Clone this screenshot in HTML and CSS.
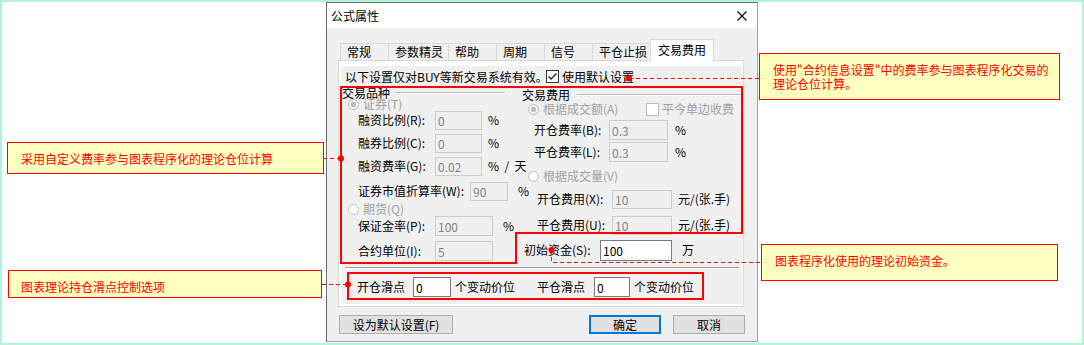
FILE: index.html
```html
<!DOCTYPE html>
<html lang="zh-CN">
<head>
  <meta charset="UTF-8" />
  <title>公式属性</title>
  <link rel="stylesheet" href="styles.css">
</head>
<body>
<div class="stage">
  <div class="dialog">
    <div class="titlebar">
      <span>公式属性</span>
      <svg class="close" width="10" height="10" viewBox="0 0 10 10"><path d="M0.5 0.5L9.5 9.5M9.5 0.5L0.5 9.5" stroke="#000" stroke-width="1.1" fill="none"/></svg>
    </div>

    <div class="dialog-body">
      <div class="tabs">
        <div class="tab">常规</div>
        <div class="tab">参数精灵</div>
        <div class="tab">帮助</div>
        <div class="tab">周期</div>
        <div class="tab">信号</div>
        <div class="tab">平仓止损</div>
        <div class="tab active">交易费用</div>
      </div>

      <div class="panel">
        <div class="page">
          <div class="notice">
            <span class="notice-text">以下设置仅对BUY等新交易系统有效。</span>
            <span class="checkbox"><svg width="11" height="11" viewBox="0 0 11 11"><path d="M1.5 5.5L4 8L9.5 2.5" stroke="#222" stroke-width="1.3" fill="none"/></svg></span>
            <span>使用默认设置</span>
          </div>

          <div class="groups">
            <div class="col col-left">
              <div class="legend"><span>交易品种</span><span class="rule rule-short"></span></div>
              <div class="row opt-l"><span class="radio on"></span><span class="muted">证券(T)</span></div>
              <div class="row field-l"><span class="lbl">融资比例(R):</span><input class="num s" disabled value="0"><span class="unit">%</span></div>
              <div class="row field-l"><span class="lbl">融券比例(C):</span><input class="num s" disabled value="0"><span class="unit">%</span></div>
              <div class="row field-l"><span class="lbl">融资费率(G):</span><input class="num s" disabled value="0.02"><span class="unit">%&nbsp; /&nbsp; 天</span></div>
              <div class="row field-l"><span class="lbl lbl-wide">证券市值折算率(W):</span><input class="num xs" disabled value="90"><span class="unit far">%</span></div>
              <div class="row opt-l"><span class="radio"></span><span class="muted">期货(Q)</span></div>
              <div class="row field-l"><span class="lbl">保证金率(P):</span><input class="num m" disabled value="100"><span class="unit far">%</span></div>
              <div class="row field-l"><span class="lbl">合约单位(I):</span><input class="num m" disabled value="5"></div>
            </div>

            <div class="col col-right">
              <div class="legend legend-r"><span>交易费用</span><span class="rule"></span></div>
              <div class="row opt-r">
                <span class="radio on"></span><span class="muted">根据成交额(A)</span>
                <span class="checkbox off"></span><span class="muted">平今单边收费</span>
              </div>
              <div class="row field-r"><span class="lbl lbl-r">开仓费率(B):</span><input class="num r" disabled value="0.3"><span class="unit mid">%</span></div>
              <div class="row field-r"><span class="lbl lbl-r">平仓费率(L):</span><input class="num r" disabled value="0.3"><span class="unit mid">%</span></div>
              <div class="row opt-r"><span class="radio"></span><span class="muted">根据成交量(V)</span></div>
              <div class="row field-f"><span class="lbl lbl-r">开仓费用(X):</span><input class="num f" disabled value="10"><span class="unit">元/(张.手)</span></div>
              <div class="row field-f"><span class="lbl lbl-r">平仓费用(U):</span><input class="num f" disabled value="10"><span class="unit">元/(张.手)</span></div>
              <div class="row field-cap"><span class="lbl lbl-cap">初始资金(S):</span><input class="num cap live" value="100"><span class="unit far">万</span></div>
            </div>
          </div>

          <div class="separator"></div>

          <div class="slip">
            <span class="slip-lbl">开仓滑点</span>
            <input class="num live slip-open" value="0">
            <span class="slip-unit first">个变动价位</span>
            <span class="slip-lbl second">平仓滑点</span>
            <input class="num live slip-close" value="0">
            <span class="slip-unit">个变动价位</span>
          </div>
        </div>
      </div>

      <div class="buttons">
        <button class="btn btn-wide">设为默认设置(F)</button>
        <button class="btn btn-ok">确定</button>
        <button class="btn btn-cancel">取消</button>
      </div>
    </div>
  </div>

  <!-- red annotation marks -->
  <svg class="marks" width="1084" height="345" viewBox="0 0 1084 345">
    <g fill="none" stroke="#ff0000">
      <path d="M341 87H742V233H516V263H341Z" stroke-width="2"/>
      <rect x="348" y="273" width="355" height="26" stroke-width="2"/>
      <g stroke-width="1" stroke-dasharray="4 3">
        <path d="M323 158.5H341"/>
        <path d="M322 284.5H348"/>
        <path d="M629 78.5H759"/>
        <path d="M551.5 250V262.5H761"/>
      </g>
    </g>
    <g fill="#ff0000">
      <circle cx="341" cy="158.5" r="3"/>
      <circle cx="348" cy="284.5" r="3"/>
      <circle cx="629" cy="78.5" r="3"/>
      <circle cx="551.5" cy="250" r="3"/>
    </g>
  </svg>

  <div class="callout note-rate">采用自定义费率参与图表程序化的理论仓位计算</div>
  <div class="callout note-slip">图表理论持仓滑点控制选项</div>
  <div class="callout note-default">使用"合约信息设置"中的费率参与图表程序化交易的<br>理论仓位计算。</div>
  <div class="callout note-capital">图表程序化使用的理论初始资金。</div>
</div>
</body>
</html>
```

FILE: styles.css
```css
* {
  box-sizing: border-box;
}

html, body {
  margin: 0;
}

body {
  width: 1084px;
  height: 345px;
  border: 2px solid #b0f5d8;
  background: #fff;
  font-family: "Noto Sans CJK SC", "Noto Sans", sans-serif;
  font-size: 12px;
  line-height: 14px;
  color: #000;
  overflow: hidden;
}

.stage {
  position: relative;
  height: 100%;
}

/* dialog window */
.dialog {
  margin-left: 324px;
  width: 432px;
  height: 340px;
  display: flex;
  flex-direction: column;
  border: 1px solid #6b6b6b;
  border-right-color: #a3a3a3;
  border-bottom-color: #a3a3a3;
}

.titlebar {
  flex: none;
  height: 25px;
  display: flex;
  align-items: center;
  justify-content: space-between;
  padding: 1px 10px 0 4px;
  background: #fff;
}

.dialog-body {
  flex: 1;
  background: #f0f0f0;
  padding: 11px 13px 0 11px;
}

/* tabs */
.tabs {
  display: flex;
  align-items: flex-end;
  height: 21px;
  padding-left: 2px;
}

.tab {
  height: 17px;
  min-width: 49px;
  margin-left: -1px;
  padding: 0 5px 1px 6px;
  display: flex;
  align-items: center;
  border: 1px solid #d9d9d9;
  border-bottom: none;
  background: #f0f0f0;
  white-space: nowrap;
}

.tab:first-child {
  margin-left: 0;
}

.tab.active {
  position: relative;
  z-index: 1;
  width: 64px;
  height: 22px;
  margin-left: -3px;
  margin-bottom: -1px;
  padding: 0 7px 2px;
  background: #fff;
}

.panel {
  height: 247px;
  background: #fff;
  border: 1px solid #d9d9d9;
  padding: 5px 1px 2px 2px;
}

.page {
  height: 238px;
  background: #f0f0f0;
}

.notice {
  height: 20px;
  display: flex;
  align-items: center;
  padding: 1px 0 0 4px;
  white-space: nowrap;
}

.notice-text {
  width: 201px;
  flex: none;
}

.checkbox {
  flex: none;
  width: 13px;
  height: 13px;
  margin-right: 3px;
  display: flex;
  align-items: center;
  justify-content: center;
  border: 1px solid #333;
  background: #fff;
}

.checkbox.off {
  margin-left: auto;
  border-color: #bcbcbc;
}

/* group boxes */
.groups {
  display: flex;
  height: 178px;
}

.col {
  display: grid;
  align-items: center;
}

.col-left {
  width: 175px;
  grid-template-rows: 14px 8px 24px 22px 24px 26px 10px 24px 26px;
}

.col-right {
  width: 226px;
  grid-template-rows: 18px 10px 32px 12px 36px 10px 42px 8px;
}

.legend {
  height: 14px;
  display: flex;
  align-items: center;
  padding-left: 1px;
  white-space: nowrap;
}

.legend-r {
  padding-left: 6px;
}

.rule {
  flex: 1;
  height: 2px;
  margin-left: 7px;
  border-top: 1px solid #bdbdbd;
  border-bottom: 1px solid #fff;
}

.rule-short {
  flex: none;
  width: 110px;
  margin-left: 5px;
}

.row {
  height: 20px;
  display: flex;
  align-items: center;
  white-space: nowrap;
}

.opt-l { padding-left: 7px; }
.opt-r { padding: 0 8px 0 12px; }
.field-l { padding-left: 17px; }
.field-r { padding-left: 18px; }
.field-f { padding-left: 21px; }
.field-cap { padding-left: 8px; }

.radio {
  flex: none;
  width: 11px;
  height: 11px;
  margin-right: 4px;
  border-radius: 50%;
  border: 1px solid #bcbcbc;
  background: #fff;
}

.radio.on {
  background: radial-gradient(circle, #bcbcbc 0 2.5px, #f4f4f4 3px);
}

.muted {
  color: #a0a0a0;
}

.lbl {
  flex: none;
  width: 77px;
}

.lbl-wide { width: 112px; }
.lbl-r { width: 75px; }
.lbl-cap { width: 76px; }

.num {
  flex: none;
  height: 19px;
  padding: 0 2px;
  border: 1px solid #cccccc;
  background: #f0f0f0;
  color: #838383;
  font: inherit;
  outline: none;
}

.num.live {
  background: #fff;
  border-color: #7a7a7a;
  color: #000;
}

.num.s { width: 47px; }
.num.xs { width: 38px; }
.num.m { width: 58px; height: 20px; }
.num.r { width: 59px; height: 20px; }
.num.f { width: 60px; }
.num.cap { width: 72px; height: 21px; }

.unit { margin-left: 6px; }
.unit.mid { margin-left: 7px; }
.unit.far { margin-left: 10px; }

.separator {
  height: 2px;
  margin: 3px 3px 0 4px;
  border-top: 1px solid #a0a0a0;
  border-bottom: 1px solid #fff;
}

/* slippage row */
.slip {
  height: 20px;
  margin-top: 8px;
  padding-left: 16px;
  display: flex;
  align-items: center;
  white-space: nowrap;
}

.slip .num {
  height: 20px;
}

.slip-lbl { width: 56px; }
.slip-lbl.second { width: 57px; }
.slip-open { width: 38px; }
.slip-close { width: 36px; }
.slip-unit { margin-left: 4px; }
.slip-unit.first { width: 82px; }

/* buttons */
.buttons {
  display: flex;
  margin: 8px -1px 0 1px;
}

.btn {
  height: 19px;
  padding: 0;
  border: 1px solid #adadad;
  background: #e1e1e1;
  font: inherit;
  color: #000;
}

.btn-wide { width: 114px; }

.btn-ok {
  width: 72px;
  margin-left: auto;
  border: 2px solid #0078d7;
}

.btn-cancel {
  width: 72px;
  margin-left: 12px;
}

/* annotations */
.marks {
  position: absolute;
  left: -2px;
  top: -2px;
  pointer-events: none;
}

.callout {
  position: absolute;
  background: #ffffc0;
  border: 1px solid #ff0000;
  color: #ff0000;
  line-height: 14px;
  white-space: nowrap;
}

.note-rate {
  left: 5px;
  top: 140px;
  width: 317px;
  height: 32px;
  padding: 9px 0 0 13px;
}

.note-slip {
  left: 6px;
  top: 268px;
  width: 314px;
  height: 28px;
  padding: 9px 0 0 12px;
}

.note-default {
  left: 757px;
  top: 51px;
  width: 301px;
  height: 47px;
  padding: 9px 0 0 13px;
}

.note-capital {
  left: 759px;
  top: 242px;
  width: 297px;
  height: 37px;
  padding: 9px 0 0 13px;
}
```
